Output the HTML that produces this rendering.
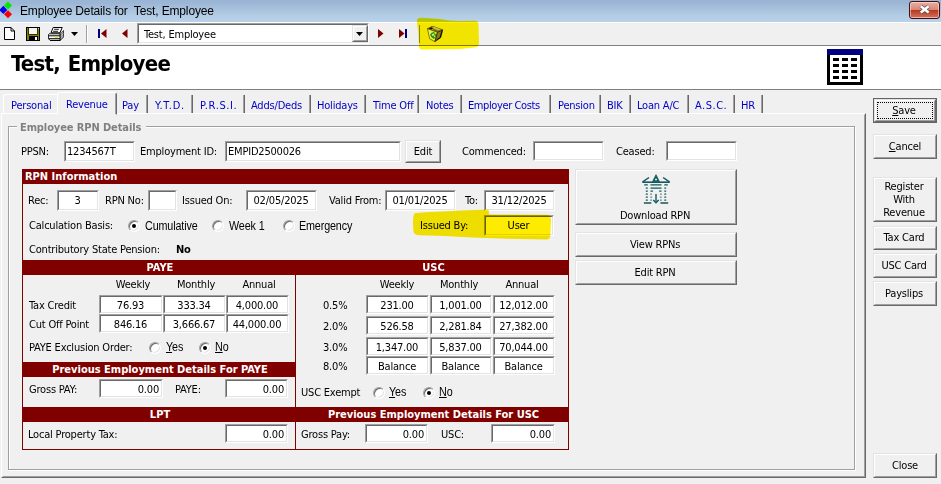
<!DOCTYPE html><html><head><meta charset="utf-8"><title>Employee Details</title><style>
*{box-sizing:border-box;margin:0;padding:0}
html,body{width:941px;height:484px;overflow:hidden;background:#f0f0f0}
body{position:relative;font-family:"DejaVu Sans Condensed","Liberation Sans",sans-serif;font-size:11px;color:#000;letter-spacing:-0.2px}
.a{position:absolute;white-space:nowrap}
.t{position:absolute;white-space:nowrap;line-height:13px;height:13px}
.m{font-family:"Liberation Sans",sans-serif;font-size:12.5px;letter-spacing:-0.15px;transform:scaleX(.86);transform-origin:0 0}
.in{position:absolute;background:#fff;border:1px solid;border-color:#a0a0a0 #fff #fff #a0a0a0;white-space:nowrap}
.in i{position:absolute;left:0;top:0;right:0;bottom:0;border:1px solid;border-color:#696969 #e3e3e3 #e3e3e3 #696969;font-style:normal;line-height:13px;padding:2px 2px 0 1px;overflow:hidden}
.c i{text-align:center}.r i{text-align:right;padding-right:2px}
.btn{position:absolute;background:#f0f0f0;border:1px solid;border-color:#e3e3e3 #696969 #696969 #e3e3e3;text-align:center;white-space:nowrap}
.btn i{position:absolute;left:0;top:0;right:0;bottom:0;border:1px solid;border-color:#fff #a0a0a0 #a0a0a0 #fff;font-style:normal;display:flex;align-items:center;justify-content:center;line-height:16px}
.hd{position:absolute;background:#800000;color:#fff;font-weight:bold;line-height:15px;letter-spacing:0;padding-left:2px;white-space:nowrap;text-align:center}
.rad{position:absolute;width:12px;height:12px;border-radius:50%;background:#fff;border:1px solid;border-color:#a0a0a0 #fff #fff #a0a0a0;box-shadow:inset 1px 1px 0 #696969, inset -1px -1px 0 #e3e3e3}
.rad.on:after{content:"";position:absolute;left:3px;top:3px;width:4px;height:4px;border-radius:50%;background:#000}
.tab{position:absolute;color:#0000c8;white-space:nowrap;line-height:13px}
u{text-decoration:underline}
</style></head><body>
<div class="a" style="left:0px;top:0px;width:941px;height:22px;background:linear-gradient(#9ab4d3 0,#9cb6d5 15%,#a8c2dd 42%,#b3cde6 72%,#bad1ea 100%)"></div>
<svg class="a" style="left:0;top:0" width="14" height="20" viewBox="0 0 14 20"><path d="M8 1.500l4 4-4 4-4-4z" fill="#00e800"/><path d="M3.300 5.700l4 4.200-4 4.200-4-4.200z" fill="#0000f0"/><path d="M8 10.300l4 4-4 4-4-4z" fill="#f80000"/></svg>
<div class="a" style="left:20px;top:4px;font:12px/15px 'Liberation Sans',sans-serif;letter-spacing:-0.15px;color:#000">Employee Details for&nbsp; Test, Employee</div>
<div class="a" style="left:909px;top:1px;width:31px;height:18px;border:1px solid #431019;border-radius:3px;background:linear-gradient(#eab0a2,#d98676 48%,#b73a20 52%,#d27360);box-shadow:inset 0 0 0 1px rgba(255,235,225,.55)"></div>
<svg class="a" style="left:918px;top:4px" width="13" height="11" viewBox="0 0 13 11"><path d="M2.800 2.300l7.800 6.300M10.600 2.300l-7.800 6.300" stroke="#6a4a4a" stroke-width="4"/><path d="M2.800 2.300l7.800 6.300M10.600 2.300l-7.800 6.300" stroke="#fff" stroke-width="2.600"/></svg>
<div class="a" style="left:0px;top:22px;width:941px;height:23px;background:#f0f0f0;border-top:1px solid #fff"></div>
<div class="a" style="left:0px;top:45px;width:941px;height:1px;background:#808080"></div>
<svg class="a" style="left:4px;top:27px" width="11" height="13" viewBox="0 0 11 13"><path d="M0.500 0.500h6.500l3.500 3.500v8.500h-10z" fill="#fff" stroke="#000"/><path d="M7 0.500v3.500h3.500" fill="none" stroke="#000"/></svg>
<svg class="a" style="left:26px;top:27px" width="14" height="14" viewBox="0 0 14 14"><rect x="0.500" y="0.500" width="13" height="13" fill="#808000" stroke="#000"/><rect x="3" y="1" width="8" height="6" fill="#f4f4f4"/><path d="M2.500 1v6.500h9v-6.500" fill="none" stroke="#000" stroke-width="0.600"/><rect x="3" y="9" width="9" height="4.500" fill="#000"/><rect x="9" y="10" width="2" height="3" fill="#fff"/><rect x="12" y="1" width="1" height="1" fill="#d0d0a0"/></svg>
<svg class="a" style="left:48px;top:27px" width="16" height="14" viewBox="0 0 16 14"><path d="M12 6.800L15.600 3.600v6.400L12 13.600z" fill="#8c8c8c" stroke="#000" stroke-width="0.800"/><path d="M1.200 6.800h10.800v6.800h-9.600L0.400 11.600v-4z" fill="#fff" stroke="#000" stroke-width="0.900"/><path d="M3 5.800L5.200 0.500h9L12 5.800z" fill="#fff" stroke="#000" stroke-width="1"/><path d="M6.200 2.300h4.700M5.100 4.300h4.900" stroke="#000" stroke-width="0.900"/><rect x="0.400" y="8.300" width="11.600" height="1" fill="#000"/><rect x="6.900" y="9.700" width="3.100" height="1.100" fill="#e8e000"/><rect x="0.400" y="11.200" width="11.600" height="1" fill="#000"/><rect x="2" y="12.900" width="10" height="1" fill="#000"/><path d="M12.600 6.800l2.600-2.300M12.600 9.200l2.800-2.500M12.600 11.600l2.800-2.500" stroke="#e8e8e8" stroke-width="0.700"/></svg>
<svg class="a" style="left:71px;top:32px" width="7" height="4" viewBox="0 0 7 4"><path d="M0 0h7L3.500 4z" fill="#000"/></svg>
<div class="a" style="left:86px;top:25px;width:2px;height:18px;border-left:1px solid #a0a0a0;border-right:1px solid #fff"></div>
<svg class="a" style="left:98px;top:29px" width="9" height="9" viewBox="0 0 9 9"><rect x="0" y="0" width="2" height="9" fill="#000080"/><path d="M8.500 0v9L3 4.500z" fill="#800000"/></svg>
<svg class="a" style="left:122px;top:29px" width="6" height="9" viewBox="0 0 6 9"><path d="M5.500 0v9L0 4.500z" fill="#800000"/></svg>
<div class="in " style="left:137px;top:23px;width:232px;height:21px"><i style="padding:3px 0 0 5px">Test, Employee</i></div>
<div class="btn" style="left:352px;top:25px;width:16px;height:17px"><i></i></div>
<svg class="a" style="left:356px;top:32px" width="7" height="4" viewBox="0 0 7 4"><path d="M0 0h7L3.500 4z" fill="#000"/></svg>
<svg class="a" style="left:378px;top:29px" width="6" height="9" viewBox="0 0 6 9"><path d="M0 0v9L5.500 4.500z" fill="#800000"/></svg>
<svg class="a" style="left:399px;top:29px" width="9" height="9" viewBox="0 0 9 9"><path d="M0 0v9L5.500 4.500z" fill="#800000"/><rect x="6" y="0" width="2" height="9" fill="#000080"/></svg>
<div class="a" style="left:0px;top:46px;width:941px;height:43px;background:#fff"></div>
<div class="a" style="left:0px;top:89px;width:941px;height:1px;background:#808080"></div>
<div class="a" style="left:11px;top:50px;font:bold 22px/27px 'DejaVu Sans Condensed','Liberation Sans',sans-serif;letter-spacing:-0.75px;word-spacing:1.5px">Test, Employee</div>
<svg class="a" style="left:827px;top:49px" width="36" height="36" viewBox="0 0 36 36"><rect x="1.500" y="1.500" width="33" height="33" fill="#fff" stroke="#000" stroke-width="3"/><rect x="0" y="0" width="36" height="6" fill="#000080"/><g fill="#000"><rect x="6" y="9" width="6" height="3"/><rect x="15" y="9" width="6" height="3"/><rect x="24" y="9" width="6" height="3"/><rect x="6" y="15" width="6" height="3"/><rect x="15" y="15" width="6" height="3"/><rect x="24" y="15" width="6" height="3"/><rect x="6" y="21" width="6" height="3"/><rect x="15" y="21" width="6" height="3"/><rect x="24" y="21" width="6" height="3"/><rect x="6" y="27" width="6" height="3"/><rect x="15" y="27" width="6" height="3"/><rect x="24" y="27" width="6" height="3"/></g></svg>
<svg class="a" style="left:410px;top:14px;mix-blend-mode:multiply" width="80" height="40" viewBox="0 0 80 40"><path d="M7 5.500Q8 3.500 12 3.800L30 5Q40 7.300 50 7L66 6.800Q68.500 7.200 68.500 10L69 30Q68.500 33 64 33.500L50 35L12 35.600Q9 35.500 9 32L8.300 18Q6.800 10 7 5.500z" fill="#fff300"/></svg>
<div class="a" style="left:419px;top:25px;width:1px;height:18px;background:#8a8420"></div>
<svg class="a" style="left:427px;top:26px" width="16" height="16" viewBox="0 0 16 16"><path d="M0.400 2.700L5.400 0.200 15.800 3.900 10.400 6.400z" fill="#a89c20" stroke="#3a3400" stroke-width="0.600"/><path d="M1.800 2.400L4 1.300 6.300 2.300 4.200 3.500z" fill="#141000"/><path d="M5.600 1.400L7.400 0.900 13.600 3.400 11.600 4.300z" fill="#d6cc48"/><path d="M6.500 3.600L10.600 5.300 12.400 4.500" fill="none" stroke="#4a4200" stroke-width="0.800"/><path d="M0.400 2.700L10.400 6.400 7.900 15.600 2.700 12.800z" fill="#f2ec48" stroke="#5a5000" stroke-width="0.700"/><path d="M10.400 6.400L15.800 3.900 13.600 11.800 7.900 15.600z" fill="#8a7e10" stroke="#1a1600" stroke-width="0.700"/><path d="M14.800 5.200L13.200 11.400 9.400 14" fill="none" stroke="#0a0800" stroke-width="1"/><path d="M4.600 7.600l2.200-0.900M3.900 8.600l1 2.200M7.800 8l0.600 1.800M5.800 11.600l2.100 0.300M6.200 10.200l0.600 1.800" stroke="#10901c" stroke-width="1.400" stroke-linecap="round"/></svg>
<div class="a" style="left:1px;top:113px;width:865px;height:365px;border:1px solid;border-color:#fff #696969 #696969 #fff;background:#f0f0f0"></div>
<div class="a" style="left:2px;top:114px;width:863px;height:363px;border:1px solid;border-color:#f0f0f0 #a0a0a0 #a0a0a0 #f0f0f0"></div>
<div class="a" style="left:3px;top:94px;width:54px;height:19px;border:1px solid;border-color:#fff transparent transparent #fff;border-radius:3px 0 0 0"></div>
<div class="a" style="left:146px;top:95px;width:2px;height:18px;border-left:1px solid #a0a0a0;border-right:1px solid #696969;width:2px"></div>
<div class="a" style="left:191px;top:95px;width:2px;height:18px;border-left:1px solid #a0a0a0;border-right:1px solid #696969;width:2px"></div>
<div class="a" style="left:243px;top:95px;width:2px;height:18px;border-left:1px solid #a0a0a0;border-right:1px solid #696969;width:2px"></div>
<div class="a" style="left:309px;top:95px;width:2px;height:18px;border-left:1px solid #a0a0a0;border-right:1px solid #696969;width:2px"></div>
<div class="a" style="left:364px;top:95px;width:2px;height:18px;border-left:1px solid #a0a0a0;border-right:1px solid #696969;width:2px"></div>
<div class="a" style="left:417px;top:95px;width:2px;height:18px;border-left:1px solid #a0a0a0;border-right:1px solid #696969;width:2px"></div>
<div class="a" style="left:460px;top:95px;width:2px;height:18px;border-left:1px solid #a0a0a0;border-right:1px solid #696969;width:2px"></div>
<div class="a" style="left:549px;top:95px;width:2px;height:18px;border-left:1px solid #a0a0a0;border-right:1px solid #696969;width:2px"></div>
<div class="a" style="left:599px;top:95px;width:2px;height:18px;border-left:1px solid #a0a0a0;border-right:1px solid #696969;width:2px"></div>
<div class="a" style="left:629px;top:95px;width:2px;height:18px;border-left:1px solid #a0a0a0;border-right:1px solid #696969;width:2px"></div>
<div class="a" style="left:687px;top:95px;width:2px;height:18px;border-left:1px solid #a0a0a0;border-right:1px solid #696969;width:2px"></div>
<div class="a" style="left:733px;top:95px;width:2px;height:18px;border-left:1px solid #a0a0a0;border-right:1px solid #696969;width:2px"></div>
<div class="a" style="left:761px;top:95px;width:2px;height:18px;border-left:1px solid #a0a0a0;border-right:1px solid #696969;width:2px"></div>
<div class="a" style="left:57px;top:92px;width:60px;height:23px;background:#f0f0f0;border:1px solid;border-color:#fff #696969 transparent #fff;border-radius:3px 3px 0 0"></div>
<div class="a" style="left:115px;top:94px;width:1px;height:20px;background:#a0a0a0"></div>
<div class="tab" style="left:11px;top:99px;">Personal</div>
<div class="tab" style="left:66px;top:98px;">Revenue</div>
<div class="tab" style="left:122px;top:99px;">Pay</div>
<div class="tab" style="left:155px;top:99px;letter-spacing:0.7px">Y.T.D.</div>
<div class="tab" style="left:200px;top:99px;letter-spacing:0.6px">P.R.S.I.</div>
<div class="tab" style="left:251px;top:99px;">Adds/Deds</div>
<div class="tab" style="left:317px;top:99px;">Holidays</div>
<div class="tab" style="left:373px;top:99px;">Time Off</div>
<div class="tab" style="left:426px;top:99px;">Notes</div>
<div class="tab" style="left:468px;top:99px;letter-spacing:-0.4px">Employer Costs</div>
<div class="tab" style="left:558px;top:99px;">Pension</div>
<div class="tab" style="left:607px;top:99px;">BIK</div>
<div class="tab" style="left:637px;top:99px;">Loan A/C</div>
<div class="tab" style="left:695px;top:99px;letter-spacing:0.5px">A.S.C.</div>
<div class="tab" style="left:741px;top:99px;">HR</div>
<div class="a" style="left:8px;top:126px;width:847px;height:344px;border:1px solid #a0a0a0;box-shadow:1px 1px 0 #fff, inset 1px 1px 0 #fff"></div>
<div class="a" style="left:17px;top:121px;background:#f0f0f0;padding:0 5px 0 3px;color:#808080;font-weight:bold;line-height:14px;font-size:11px;letter-spacing:-0.1px">Employee RPN Details</div>
<div class="t " style="left:21px;top:145px;">PPSN:</div>
<div class="in " style="left:64px;top:141px;width:71px;height:21px"><i style="">1234567T</i></div>
<div class="t " style="left:140px;top:145px;">Employment ID:</div>
<div class="in " style="left:225px;top:141px;width:176px;height:21px"><i style="">EMPID2500026</i></div>
<div class="btn" style="left:405px;top:140px;width:36px;height:23px;"><i>Edit</i></div>
<div class="t " style="left:462px;top:145px;">Commenced:</div>
<div class="in " style="left:533px;top:141px;width:71px;height:20px"><i style=""></i></div>
<div class="t " style="left:616px;top:145px;">Ceased:</div>
<div class="in " style="left:666px;top:141px;width:71px;height:20px"><i style=""></i></div>
<div class="a" style="left:22px;top:169px;width:547px;height:281px;border:1px solid #800000"></div>
<div class="hd" style="left:22px;top:169px;width:547px;height:15px;text-align:left;padding-left:3px;line-height:16px">RPN Information</div>
<div class="t " style="left:28px;top:194px;">Rec:</div>
<div class="in c" style="left:57px;top:190px;width:42px;height:21px"><i style="">3</i></div>
<div class="t " style="left:105px;top:194px;">RPN No:</div>
<div class="in " style="left:148px;top:190px;width:29px;height:21px"><i style=""></i></div>
<div class="t " style="left:182px;top:194px;">Issued On:</div>
<div class="in c" style="left:246px;top:190px;width:71px;height:21px"><i style="">02/05/2025</i></div>
<div class="t " style="left:329px;top:194px;">Valid From:</div>
<div class="in c" style="left:385px;top:190px;width:71px;height:21px"><i style="">01/01/2025</i></div>
<div class="t " style="left:465px;top:194px;">To:</div>
<div class="in c" style="left:484px;top:190px;width:71px;height:21px"><i style="">31/12/2025</i></div>
<div class="t " style="left:29px;top:219px;">Calculation Basis:</div>
<div class="rad on" style="left:128px;top:220px"></div>
<div class="t m" style="left:145px;top:220px;">Cumulative</div>
<div class="rad" style="left:212px;top:220px"></div>
<div class="t m" style="left:229px;top:220px;">Week 1</div>
<div class="rad" style="left:283px;top:220px"></div>
<div class="t m" style="left:299px;top:220px;">Emergency</div>
<div class="t " style="left:420px;top:219px;">Issued By:</div>
<div class="in c" style="left:484px;top:215px;width:70px;height:21px"><i style="">User</i></div>
<svg class="a" style="left:405px;top:205px;mix-blend-mode:multiply" width="155" height="42" viewBox="0 0 155 42"><path d="M8 18.500Q8 10 9.500 8.500Q10.500 7.600 31 6.700L58 5.500L83.500 4.400L84 9.500L142 9.800Q146 10 146 14.900L145.300 31Q145 34.500 141 34.400L103.400 33.800L67.300 32.600L40 31L15 30.200Q9 30 8.500 27z" fill="#fdeb00"/></svg>
<div class="t " style="left:29px;top:243px;">Contributory State Pension:</div>
<div class="t " style="left:176px;top:243px;font-weight:bold">No</div>
<div class="hd" style="left:22px;top:260px;width:274px;height:15px;">PAYE</div>
<div class="hd" style="left:296px;top:260px;width:273px;height:15px;">USC</div>
<div class="a" style="left:295px;top:260px;width:1px;height:190px;background:#800000"></div>
<div class="t " style="left:103px;top:278px;width:60px;text-align:center">Weekly</div>
<div class="t " style="left:166px;top:278px;width:60px;text-align:center">Monthly</div>
<div class="t " style="left:229px;top:278px;width:60px;text-align:center">Annual</div>
<div class="t " style="left:29px;top:299px;">Tax Credit</div>
<div class="t " style="left:29px;top:318px;">Cut Off Point</div>
<div class="in c" style="left:99px;top:295px;width:64px;height:19px"><i style="">76.93</i></div>
<div class="in c" style="left:163px;top:295px;width:63px;height:19px"><i style="">333.34</i></div>
<div class="in c" style="left:226px;top:295px;width:63px;height:19px"><i style="">4,000.00</i></div>
<div class="in c" style="left:99px;top:314px;width:64px;height:19px"><i style="">846.16</i></div>
<div class="in c" style="left:163px;top:314px;width:63px;height:19px"><i style="">3,666.67</i></div>
<div class="in c" style="left:226px;top:314px;width:63px;height:19px"><i style="">44,000.00</i></div>
<div class="t " style="left:29px;top:341px;">PAYE Exclusion Order:</div>
<div class="rad" style="left:149px;top:342px"></div>
<div class="t m" style="left:166px;top:341px;"><u>Y</u>es</div>
<div class="rad on" style="left:199px;top:342px"></div>
<div class="t m" style="left:215px;top:341px;"><u>N</u>o</div>
<div class="hd" style="left:22px;top:362px;width:274px;height:15px;">Previous Employment Details For PAYE</div>
<div class="t " style="left:29px;top:383px;">Gross PAY:</div>
<div class="in r" style="left:99px;top:379px;width:64px;height:19px"><i style="">0.00</i></div>
<div class="t " style="left:175px;top:383px;">PAYE:</div>
<div class="in r" style="left:225px;top:379px;width:63px;height:19px"><i style="">0.00</i></div>
<div class="hd" style="left:22px;top:407px;width:274px;height:15px;">LPT</div>
<div class="t " style="left:28px;top:428px;">Local Property Tax:</div>
<div class="in r" style="left:225px;top:424px;width:63px;height:19px"><i style="">0.00</i></div>
<div class="t " style="left:367px;top:278px;width:60px;text-align:center">Weekly</div>
<div class="t " style="left:429px;top:278px;width:60px;text-align:center">Monthly</div>
<div class="t " style="left:492px;top:278px;width:60px;text-align:center">Annual</div>
<div class="t " style="left:323px;top:299px;">0.5%</div>
<div class="in c" style="left:366px;top:295px;width:63px;height:19px"><i style="">231.00</i></div>
<div class="in c" style="left:430px;top:295px;width:62px;height:19px"><i style="">1,001.00</i></div>
<div class="in c" style="left:493px;top:295px;width:62px;height:19px"><i style="">12,012.00</i></div>
<div class="t " style="left:323px;top:320px;">2.0%</div>
<div class="in c" style="left:366px;top:316px;width:63px;height:19px"><i style="">526.58</i></div>
<div class="in c" style="left:430px;top:316px;width:62px;height:19px"><i style="">2,281.84</i></div>
<div class="in c" style="left:493px;top:316px;width:62px;height:19px"><i style="">27,382.00</i></div>
<div class="t " style="left:323px;top:341px;">3.0%</div>
<div class="in c" style="left:366px;top:337px;width:63px;height:19px"><i style="">1,347.00</i></div>
<div class="in c" style="left:430px;top:337px;width:62px;height:19px"><i style="">5,837.00</i></div>
<div class="in c" style="left:493px;top:337px;width:62px;height:19px"><i style="">70,044.00</i></div>
<div class="t " style="left:323px;top:360px;">8.0%</div>
<div class="in c" style="left:366px;top:356px;width:63px;height:19px"><i style="">Balance</i></div>
<div class="in c" style="left:430px;top:356px;width:62px;height:19px"><i style="">Balance</i></div>
<div class="in c" style="left:493px;top:356px;width:62px;height:19px"><i style="">Balance</i></div>
<div class="t " style="left:301px;top:386px;">USC Exempt</div>
<div class="rad" style="left:373px;top:387px"></div>
<div class="t m" style="left:389px;top:386px;"><u>Y</u>es</div>
<div class="rad on" style="left:423px;top:387px"></div>
<div class="t m" style="left:439px;top:386px;"><u>N</u>o</div>
<div class="hd" style="left:296px;top:407px;width:273px;height:15px;">Previous Employment Details For USC</div>
<div class="t " style="left:301px;top:428px;">Gross Pay:</div>
<div class="in r" style="left:365px;top:424px;width:63px;height:19px"><i style="">0.00</i></div>
<div class="t " style="left:441px;top:428px;">USC:</div>
<div class="in r" style="left:491px;top:424px;width:64px;height:19px"><i style="">0.00</i></div>
<div class="btn" style="left:575px;top:169px;width:162px;height:56px;"><i><span style="position:absolute;left:0;right:2px;top:38px;line-height:13px">Download RPN</span></i></div>
<div class="btn" style="left:575px;top:232px;width:162px;height:25px;"><i style="padding-right:2px">View RPNs</i></div>
<div class="btn" style="left:575px;top:260px;width:162px;height:25px;"><i style="padding-right:2px">Edit RPN</i></div>
<svg class="a" style="left:642px;top:174px" width="28" height="31" viewBox="0 0 28 31"><g fill="none" stroke="#125a5e"><path d="M0.700 7.800L7 3.500M27.400 7.800L21.100 3.500" stroke-width="1.500"/><path d="M14 0.700L10.600 7.600h6.800z" fill="#125a5e" stroke-width="0.800"/><circle cx="14" cy="5.600" r="1" fill="#f0f0f0" stroke="none"/><path d="M0.300 8.200h27.500" stroke-width="1.600"/><path d="M2.200 10.900h3.600M8.500 10.900h11M22.300 10.900h3.500M3.800 14.100h2M8.500 14.100h11M22.300 14.100h1.900M3.800 17.100h2M8.500 17.100h2.400M17.200 17.100h2.300M22.300 17.100h1.900M3.800 20.1h2M8.500 20.1h1.200M18.300 20.1h1.200M22.300 20.1h1.900M3.800 23.1h2M8.500 23.1h1.200M18.300 23.1h1.200M22.300 23.1h1.900M3.800 26.1h2M8.500 26.1h1.200M18.300 26.1h1.200M22.300 26.1h1.900" stroke-width="1.300"/><path d="M14 20v7.500" stroke-width="1.400"/><path d="M11.300 25.900l2.700 2.900 2.700-2.900" stroke-width="1.400"/><path d="M1.900 29h7.400M18.400 29h7.800" stroke-width="1.500"/></g></svg>
<div class="a" style="left:873px;top:98px;width:64px;height:25px;border:1px solid #646464"></div>
<div class="btn" style="left:874px;top:99px;width:62px;height:23px;"><i></i></div>
<div class="a" style="left:877px;top:102px;width:56px;height:17px;border:1px dotted #000"></div>
<div class="t " style="left:873px;top:104px;width:62px;text-align:center"><u>S</u>ave</div>
<div class="btn" style="left:873px;top:134px;width:64px;height:25px;"><i><u>C</u>ancel</i></div>
<div class="btn" style="left:873px;top:177px;width:64px;height:45px;"><i style="padding-right:2px"><span style="line-height:13px">Register<br>With<br>Revenue</span></i></div>
<div class="btn" style="left:873px;top:226px;width:64px;height:24px;"><i style="padding-right:2px">Tax Card</i></div>
<div class="btn" style="left:873px;top:253px;width:64px;height:25px;"><i style="padding-right:2px">USC Card</i></div>
<div class="btn" style="left:873px;top:281px;width:64px;height:25px;"><i style="padding-right:2px">Payslips</i></div>
<div class="btn" style="left:873px;top:453px;width:64px;height:25px;"><i>Close</i></div>
</body></html>
